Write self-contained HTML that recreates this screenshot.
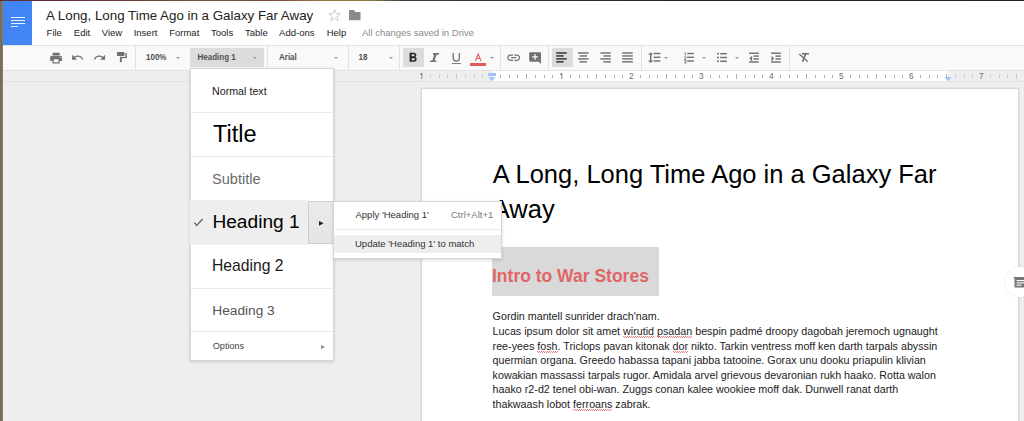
<!DOCTYPE html>
<html><head><meta charset="utf-8"><title>Google Docs</title><style>*{margin:0;padding:0;box-sizing:content-box}
html,body{width:1024px;height:421px;overflow:hidden;background:#eee}
body{position:relative;font-family:"Liberation Sans", sans-serif}
.t{position:absolute;line-height:1;white-space:pre;font-family:"Liberation Sans", sans-serif}
.r{position:absolute}
u{text-decoration:none;position:relative}
u::after{content:"";position:absolute;left:0;right:0;top:11.2px;height:2px;background:repeating-linear-gradient(90deg,#ec8080 0 1px,transparent 1px 2px) 0 0/100% 1px no-repeat,repeating-linear-gradient(90deg,transparent 0 1px,#ec8080 1px 2px) 0 1px/100% 1px no-repeat}
.arr{position:absolute;width:0;height:0;border-left:2px solid transparent;border-right:2px solid transparent;border-top:2px solid #999}
</style></head><body>
<div class="r" style="left:0px;top:0px;width:1024px;height:421px;background:#eeeeee;"></div>
<div class="r" style="left:3px;top:1px;width:1021px;height:44px;background:#ffffff;"></div>
<div class="r" style="left:3px;top:45px;width:1021px;height:1px;background:#e5e5e5;"></div>
<div class="r" style="left:3px;top:46px;width:1021px;height:24px;background:#f9f9f9;"></div>
<div class="r" style="left:3px;top:70px;width:1021px;height:1px;background:#e3e3e3;"></div>
<div class="r" style="left:3px;top:71px;width:1021px;height:10px;background:#eeeeee;"></div>
<div class="r" style="left:492px;top:71px;width:455.5px;height:10px;background:#ffffff;"></div>
<div class="r" style="left:3px;top:81px;width:1021px;height:1px;background:#e2e2e2;"></div>
<div class="r" style="left:0px;top:0px;width:2px;height:421px;background:#7b6e58;"></div>
<div class="r" style="left:2px;top:0px;width:1px;height:421px;background:#877b66;"></div>
<div class="r" style="left:0px;top:0px;width:1024px;height:1px;background:linear-gradient(90deg,#5a2a38 0px,#6a3a3a 120px,#70583e 200px,#7a4a40 270px,#9a7a40 330px,#8a7a40 370px,#3a4440 400px,#2a3434 500px,#1e2626 700px,#1a2028 1024px);"></div>
<div class="r" style="left:3px;top:1px;width:29px;height:44px;background:#4285f4;"></div>
<div class="r" style="left:11px;top:17px;width:13.5px;height:1.4px;background:rgba(255,255,255,0.86)"></div>
<div class="r" style="left:11px;top:20px;width:13.5px;height:1.4px;background:rgba(255,255,255,0.86)"></div>
<div class="r" style="left:11px;top:23px;width:13.5px;height:1.4px;background:rgba(255,255,255,0.86)"></div>
<div class="r" style="left:11px;top:26px;width:7px;height:1.4px;background:rgba(255,255,255,0.86)"></div>
<div class="t" style="left:46.00px;top:8.72px;font-size:13.33px;color:#222;font-weight:400;">A Long, Long Time Ago in a Galaxy Far Away</div>
<div class="t" style="left:46.60px;top:28.06px;font-size:9.5px;color:#222;font-weight:400;">File</div>
<div class="t" style="left:73.80px;top:28.06px;font-size:9.5px;color:#222;font-weight:400;">Edit</div>
<div class="t" style="left:101.80px;top:28.06px;font-size:9.5px;color:#222;font-weight:400;">View</div>
<div class="t" style="left:133.70px;top:28.06px;font-size:9.5px;color:#222;font-weight:400;">Insert</div>
<div class="t" style="left:169.20px;top:28.06px;font-size:9.5px;color:#222;font-weight:400;">Format</div>
<div class="t" style="left:211.00px;top:28.06px;font-size:9.5px;color:#222;font-weight:400;">Tools</div>
<div class="t" style="left:245.00px;top:28.06px;font-size:9.5px;color:#222;font-weight:400;">Table</div>
<div class="t" style="left:279.10px;top:28.06px;font-size:9.5px;color:#222;font-weight:400;">Add-ons</div>
<div class="t" style="left:326.70px;top:28.06px;font-size:9.5px;color:#222;font-weight:400;">Help</div>
<div class="t" style="left:362.00px;top:28.06px;font-size:9.5px;color:#8a8a8a;font-weight:400;">All changes saved in Drive</div>
<svg class="r" style="left:328px;top:8px" width="13" height="14" viewBox="0 0 13 14"><path d="M6.5 1.3 L8 5.6 L12.3 5.7 L8.9 8.4 L10.1 12.7 L6.5 10.2 L2.9 12.7 L4.1 8.4 L0.7 5.7 L5 5.6 Z" fill="none" stroke="#c8c8c8" stroke-width="0.9"/></svg>
<svg class="r" style="left:349px;top:10px" width="12" height="11" viewBox="0 0 12 11"><path d="M0 0 H5 L6.2 2 H11.5 V10.2 H0 Z" fill="#8a8a8a"/></svg>
<svg class="r" style="left:48.6px;top:50.5px" width="14.2" height="14.2" viewBox="0 0 24 24"><path fill="#717171" d="M19 8H5c-1.66 0-3 1.34-3 3v6h4v4h12v-4h4v-6c0-1.66-1.34-3-3-3zm-3 11H8v-5h8v5zm3-7c-.55 0-1-.45-1-1s.45-1 1-1 1 .45 1 1-.45 1-1 1zm-1-9H6v4h12V3z"/></svg>
<svg class="r" style="left:70.8px;top:51.2px" width="13.2" height="13.2" viewBox="0 0 24 24"><path fill="#717171" d="M12.5 8c-2.65 0-5.05.99-6.9 2.6L2 7v9h9l-3.62-3.62c1.39-1.16 3.16-1.88 5.12-1.88 3.54 0 6.55 2.31 7.6 5.5l2.37-.78C21.08 11.03 17.15 8 12.5 8z"/></svg>
<svg class="r" style="left:93.0px;top:51.0px" width="13.2" height="13.2" viewBox="0 0 24 24"><path fill="#717171" d="M18.4 10.6C16.55 8.99 14.15 8 11.5 8c-4.65 0-8.58 3.03-9.96 7.22L3.9 16c1.05-3.19 4.05-5.5 7.6-5.5 1.95 0 3.73.72 5.12 1.88L13 16h9V7l-3.6 3.6z"/></svg>
<svg class="r" style="left:116px;top:51px" width="12" height="12" viewBox="0 0 12 12"><g fill="#717171"><rect x="0.9" y="1.1" width="7.4" height="3.8" rx="0.6"/><rect x="8.2" y="2.3" width="1.4" height="1" /><rect x="9.4" y="2.3" width="1.4" height="4.7"/><rect x="4" y="5.9" width="6.8" height="1.25"/><rect x="3.9" y="5.9" width="1.9" height="5.2"/></g></svg>
<div class="r" style="left:135px;top:46px;width:1px;height:24px;background:#e2e2e2;"></div>
<div class="r" style="left:267px;top:46px;width:1px;height:24px;background:#e2e2e2;"></div>
<div class="r" style="left:348px;top:46px;width:1px;height:24px;background:#e2e2e2;"></div>
<div class="r" style="left:399px;top:46px;width:1px;height:24px;background:#e2e2e2;"></div>
<div class="r" style="left:500px;top:46px;width:1px;height:24px;background:#e2e2e2;"></div>
<div class="r" style="left:548px;top:46px;width:1px;height:24px;background:#e2e2e2;"></div>
<div class="r" style="left:641px;top:46px;width:1px;height:24px;background:#e2e2e2;"></div>
<div class="r" style="left:789px;top:46px;width:1px;height:24px;background:#e2e2e2;"></div>
<div class="t" style="left:146.00px;top:53.73px;font-size:8px;color:#505050;font-weight:700;transform:scaleY(1.24);transform-origin:0 6.8px">100%</div>
<div class="arr" style="left:175.5px;top:57px"></div>
<div class="r" style="left:190px;top:48px;width:74px;height:19px;background:#dcdcdc;border-radius:1px"></div>
<div class="t" style="left:197.50px;top:53.73px;font-size:8px;color:#505050;font-weight:700;transform:scaleY(1.24);transform-origin:0 6.8px">Heading 1</div>
<div class="arr" style="left:252.5px;top:57px"></div>
<div class="t" style="left:279.00px;top:53.73px;font-size:8px;color:#505050;font-weight:700;transform:scaleY(1.24);transform-origin:0 6.8px">Arial</div>
<div class="arr" style="left:333.5px;top:57px"></div>
<div class="t" style="left:358.50px;top:53.73px;font-size:8px;color:#505050;font-weight:700;transform:scaleY(1.24);transform-origin:0 6.8px">18</div>
<div class="arr" style="left:388.5px;top:57px"></div>
<div class="r" style="left:403px;top:48px;width:21px;height:19px;background:#dcdcdc;border-radius:1px"></div>
<svg class="r" style="left:404.6px;top:50.2px" width="15.8" height="15.8" viewBox="0 0 24 24"><path fill="#222" d="M15.6 10.79c.97-.67 1.65-1.77 1.65-2.79 0-2.26-1.75-4-4-4H7v14h7.04c2.09 0 3.71-1.7 3.71-3.79 0-1.52-.86-2.82-2.15-3.42zM10 6.5h3c.83 0 1.5.67 1.5 1.5s-.67 1.5-1.5 1.5h-3v-3zm3.5 9H10v-3h3.5c.83 0 1.5.67 1.5 1.5s-.67 1.5-1.5 1.5z"/></svg>
<svg class="r" style="left:429px;top:52px" width="11" height="11" viewBox="0 0 11 11"><path fill="#717171" d="M4 1.1 H9.9 V2.7 H7.5 L5.6 8.5 H7.4 V9.9 H1.1 V8.5 H3.3 L5.2 2.7 H4 Z"/></svg>
<svg class="r" style="left:450px;top:52px" width="12" height="13" viewBox="0 0 12 13"><path fill="none" stroke="#717171" stroke-width="1.3" d="M3.25 1 V6 A3.05 3.05 0 0 0 9.35 6 V1"/><rect x="1.8" y="11.1" width="9" height="0.95" fill="#717171"/></svg>
<svg class="r" style="left:473px;top:52px" width="10" height="11" viewBox="0 0 10 11"><path fill="none" stroke="#e06464" stroke-width="1.15" d="M2.4 9 L5.2 1.9 L8 9 M3.4 6.5 H7"/></svg>
<div class="r" style="left:470px;top:63px;width:16px;height:3px;background:#df5b5b;"></div>
<div class="arr" style="left:489.5px;top:57px"></div>
<svg class="r" style="left:505.6px;top:49.9px" width="15.4" height="15.4" viewBox="0 0 24 24"><path fill="#717171" d="M3.9 12c0-1.71 1.39-3.1 3.1-3.1h4V7H7c-2.76 0-5 2.24-5 5s2.24 5 5 5h4v-1.9H7c-1.71 0-3.1-1.39-3.1-3.1zM8 13h8v-2H8v2zm9-6h-4v1.9h4c1.71 0 3.1 1.39 3.1 3.1s-1.39 3.1-3.1 3.1h-4V17h4c2.76 0 5-2.24 5-5s-2.24-5-5-5z"/></svg>
<svg class="r" style="left:527.8px;top:51.0px" width="14.2" height="14.2" viewBox="0 0 24 24"><path fill="#717171" d="M21.99 4c0-1.1-.89-2-1.99-2H4c-1.1 0-2 .9-2 2v12c0 1.1.9 2 2 2h14l4 4-.01-18zM17 11h-4v4h-2v-4H7V9h4V5h2v4h4v2z"/></svg>
<div class="r" style="left:552px;top:48px;width:20.5px;height:19px;background:#dcdcdc;border-radius:1px"></div>
<svg class="r" style="left:0;top:0" width="1024" height="80" viewBox="0 0 1024 80"><g fill="#2e2e2e"><rect x="556.20" y="52.27" width="10.50" height="1.45"/><rect x="556.20" y="55.23" width="7.40" height="1.45"/><rect x="556.20" y="58.17" width="10.50" height="1.45"/><rect x="556.20" y="61.12" width="7.40" height="1.45"/></g></svg>
<svg class="r" style="left:0;top:0" width="1024" height="80" viewBox="0 0 1024 80"><g fill="#717171"><rect x="578.00" y="52.27" width="10.50" height="1.45"/><rect x="579.50" y="55.23" width="7.50" height="1.45"/><rect x="578.00" y="58.17" width="10.50" height="1.45"/><rect x="579.50" y="61.12" width="7.50" height="1.45"/></g></svg>
<svg class="r" style="left:0;top:0" width="1024" height="80" viewBox="0 0 1024 80"><g fill="#717171"><rect x="600.30" y="52.27" width="10.50" height="1.45"/><rect x="603.30" y="55.23" width="7.50" height="1.45"/><rect x="600.30" y="58.17" width="10.50" height="1.45"/><rect x="603.30" y="61.12" width="7.50" height="1.45"/></g></svg>
<svg class="r" style="left:0;top:0" width="1024" height="80" viewBox="0 0 1024 80"><g fill="#717171"><rect x="622.20" y="52.27" width="10.60" height="1.45"/><rect x="622.20" y="55.23" width="10.60" height="1.45"/><rect x="622.20" y="58.17" width="10.60" height="1.45"/><rect x="622.20" y="61.12" width="10.60" height="1.45"/></g></svg>
<svg class="r" style="left:646.5px;top:51.5px" width="8" height="12" viewBox="0 0 8 12"><path fill="#717171" d="M3.0 2.6 H1.0 L3.7 0.4 L6.4 2.6 H4.4 V8.6 H6.4 L3.7 10.9 L1.0 8.6 H3.0 Z"/></svg>
<svg class="r" style="left:0;top:0" width="1024" height="80" viewBox="0 0 1024 80"><g fill="#717171"><rect x="653.60" y="52.77" width="6.80" height="1.45"/><rect x="653.60" y="56.57" width="6.80" height="1.45"/><rect x="653.60" y="60.27" width="6.80" height="1.45"/></g></svg>
<div class="arr" style="left:664.2px;top:57.2px"></div>
<svg class="r" style="left:682.5px;top:51.6px" width="4.5" height="12" viewBox="0 0 4.5 12"><path fill="none" stroke="#717171" stroke-width="0.75" d="M1.3 0.8 H2.4 V3.6 M1.1 4.8 H3.1 V6 L1.3 7.6 H3.2 M1.1 8.4 H3.1 L2 9.7 H3.1 V11.1 H1.1"/></svg>
<svg class="r" style="left:0;top:0" width="1024" height="80" viewBox="0 0 1024 80"><g fill="#717171"><rect x="687.20" y="52.77" width="6.60" height="1.45"/><rect x="687.20" y="56.57" width="6.60" height="1.45"/><rect x="687.20" y="60.27" width="6.60" height="1.45"/></g></svg>
<div class="arr" style="left:702.2px;top:57.2px"></div>
<svg class="r" style="left:0;top:0" width="1024" height="80" viewBox="0 0 1024 80"><g fill="#717171"><circle cx="717.95" cy="53.7" r="1"/><circle cx="717.95" cy="57.5" r="1"/><circle cx="717.95" cy="61.3" r="1"/></g></svg>
<svg class="r" style="left:0;top:0" width="1024" height="80" viewBox="0 0 1024 80"><g fill="#717171"><rect x="720.20" y="52.98" width="6.70" height="1.45"/><rect x="720.20" y="56.77" width="6.70" height="1.45"/><rect x="720.20" y="60.57" width="6.70" height="1.45"/></g></svg>
<div class="arr" style="left:735.3px;top:57.2px"></div>
<svg class="r" style="left:0;top:0" width="1024" height="80" viewBox="0 0 1024 80"><g fill="#717171"><rect x="749.00" y="52.48" width="9.80" height="1.45"/><rect x="753.50" y="55.38" width="5.30" height="1.45"/><rect x="753.50" y="58.27" width="5.30" height="1.45"/><rect x="749.00" y="61.27" width="9.80" height="1.45"/></g></svg>
<svg class="r" style="left:749px;top:55px" width="4" height="7" viewBox="0 0 4 7"><path fill="#717171" d="M3.1 0.8 V6.4 L0.4 3.6 Z"/></svg>
<svg class="r" style="left:0;top:0" width="1024" height="80" viewBox="0 0 1024 80"><g fill="#717171"><rect x="771.00" y="52.48" width="9.80" height="1.45"/><rect x="775.50" y="55.38" width="5.30" height="1.45"/><rect x="775.50" y="58.27" width="5.30" height="1.45"/><rect x="771.00" y="61.27" width="9.80" height="1.45"/></g></svg>
<svg class="r" style="left:771px;top:55px" width="4" height="7" viewBox="0 0 4 7"><path fill="#717171" d="M0.5 0.8 V6.4 L3.2 3.6 Z"/></svg>
<svg class="r" style="left:797.5px;top:52px" width="12" height="11" viewBox="0 0 12 11"><path fill="#717171" d="M4 1 H11 V2.4 H8.3 L5.3 9.8 H3.6 L6.5 2.4 H4 Z"/><path stroke="#717171" stroke-width="1.4" d="M1.3 2 L9.8 9.8"/></svg>
<div class="r" style="left:429.75px;top:75px;width:1px;height:3px;background:#c6c6c6"></div>
<div class="r" style="left:438.50px;top:75px;width:1px;height:3px;background:#c6c6c6"></div>
<div class="r" style="left:447.25px;top:75px;width:1px;height:3px;background:#c6c6c6"></div>
<div class="r" style="left:456.00px;top:74px;width:1px;height:5px;background:#c6c6c6"></div>
<div class="r" style="left:464.75px;top:75px;width:1px;height:3px;background:#c6c6c6"></div>
<div class="r" style="left:473.50px;top:75px;width:1px;height:3px;background:#c6c6c6"></div>
<div class="r" style="left:482.25px;top:75px;width:1px;height:3px;background:#c6c6c6"></div>
<div class="r" style="left:499.75px;top:75px;width:1px;height:3px;background:#b0b0b0"></div>
<div class="r" style="left:508.50px;top:75px;width:1px;height:3px;background:#b0b0b0"></div>
<div class="r" style="left:517.25px;top:75px;width:1px;height:3px;background:#b0b0b0"></div>
<div class="r" style="left:526.00px;top:74px;width:1px;height:5px;background:#b0b0b0"></div>
<div class="r" style="left:534.75px;top:75px;width:1px;height:3px;background:#b0b0b0"></div>
<div class="r" style="left:543.50px;top:75px;width:1px;height:3px;background:#b0b0b0"></div>
<div class="r" style="left:552.25px;top:75px;width:1px;height:3px;background:#b0b0b0"></div>
<div class="r" style="left:569.75px;top:75px;width:1px;height:3px;background:#b0b0b0"></div>
<div class="r" style="left:578.50px;top:75px;width:1px;height:3px;background:#b0b0b0"></div>
<div class="r" style="left:587.25px;top:75px;width:1px;height:3px;background:#b0b0b0"></div>
<div class="r" style="left:596.00px;top:74px;width:1px;height:5px;background:#b0b0b0"></div>
<div class="r" style="left:604.75px;top:75px;width:1px;height:3px;background:#b0b0b0"></div>
<div class="r" style="left:613.50px;top:75px;width:1px;height:3px;background:#b0b0b0"></div>
<div class="r" style="left:622.25px;top:75px;width:1px;height:3px;background:#b0b0b0"></div>
<div class="r" style="left:639.75px;top:75px;width:1px;height:3px;background:#b0b0b0"></div>
<div class="r" style="left:648.50px;top:75px;width:1px;height:3px;background:#b0b0b0"></div>
<div class="r" style="left:657.25px;top:75px;width:1px;height:3px;background:#b0b0b0"></div>
<div class="r" style="left:666.00px;top:74px;width:1px;height:5px;background:#b0b0b0"></div>
<div class="r" style="left:674.75px;top:75px;width:1px;height:3px;background:#b0b0b0"></div>
<div class="r" style="left:683.50px;top:75px;width:1px;height:3px;background:#b0b0b0"></div>
<div class="r" style="left:692.25px;top:75px;width:1px;height:3px;background:#b0b0b0"></div>
<div class="r" style="left:709.75px;top:75px;width:1px;height:3px;background:#b0b0b0"></div>
<div class="r" style="left:718.50px;top:75px;width:1px;height:3px;background:#b0b0b0"></div>
<div class="r" style="left:727.25px;top:75px;width:1px;height:3px;background:#b0b0b0"></div>
<div class="r" style="left:736.00px;top:74px;width:1px;height:5px;background:#b0b0b0"></div>
<div class="r" style="left:744.75px;top:75px;width:1px;height:3px;background:#b0b0b0"></div>
<div class="r" style="left:753.50px;top:75px;width:1px;height:3px;background:#b0b0b0"></div>
<div class="r" style="left:762.25px;top:75px;width:1px;height:3px;background:#b0b0b0"></div>
<div class="r" style="left:779.75px;top:75px;width:1px;height:3px;background:#b0b0b0"></div>
<div class="r" style="left:788.50px;top:75px;width:1px;height:3px;background:#b0b0b0"></div>
<div class="r" style="left:797.25px;top:75px;width:1px;height:3px;background:#b0b0b0"></div>
<div class="r" style="left:806.00px;top:74px;width:1px;height:5px;background:#b0b0b0"></div>
<div class="r" style="left:814.75px;top:75px;width:1px;height:3px;background:#b0b0b0"></div>
<div class="r" style="left:823.50px;top:75px;width:1px;height:3px;background:#b0b0b0"></div>
<div class="r" style="left:832.25px;top:75px;width:1px;height:3px;background:#b0b0b0"></div>
<div class="r" style="left:849.75px;top:75px;width:1px;height:3px;background:#b0b0b0"></div>
<div class="r" style="left:858.50px;top:75px;width:1px;height:3px;background:#b0b0b0"></div>
<div class="r" style="left:867.25px;top:75px;width:1px;height:3px;background:#b0b0b0"></div>
<div class="r" style="left:876.00px;top:74px;width:1px;height:5px;background:#b0b0b0"></div>
<div class="r" style="left:884.75px;top:75px;width:1px;height:3px;background:#b0b0b0"></div>
<div class="r" style="left:893.50px;top:75px;width:1px;height:3px;background:#b0b0b0"></div>
<div class="r" style="left:902.25px;top:75px;width:1px;height:3px;background:#b0b0b0"></div>
<div class="r" style="left:919.75px;top:75px;width:1px;height:3px;background:#b0b0b0"></div>
<div class="r" style="left:928.50px;top:75px;width:1px;height:3px;background:#b0b0b0"></div>
<div class="r" style="left:937.25px;top:75px;width:1px;height:3px;background:#b0b0b0"></div>
<div class="r" style="left:946.00px;top:74px;width:1px;height:5px;background:#b0b0b0"></div>
<div class="r" style="left:954.75px;top:75px;width:1px;height:3px;background:#c6c6c6"></div>
<div class="r" style="left:963.50px;top:75px;width:1px;height:3px;background:#c6c6c6"></div>
<div class="r" style="left:972.25px;top:75px;width:1px;height:3px;background:#c6c6c6"></div>
<div class="r" style="left:989.75px;top:75px;width:1px;height:3px;background:#c6c6c6"></div>
<div class="r" style="left:998.50px;top:75px;width:1px;height:3px;background:#c6c6c6"></div>
<div class="r" style="left:1007.25px;top:75px;width:1px;height:3px;background:#c6c6c6"></div>
<div class="r" style="left:1016.00px;top:74px;width:1px;height:5px;background:#c6c6c6"></div>
<svg class="r" style="left:419.00px;top:72px" width="5" height="8" viewBox="0 0 5 8"><path fill="#6a6a6a" d="M2.5 1 H3.3 V6.9 H2.5 V2.4 L1.3 2.9 V2.1 Z"/></svg>
<svg class="r" style="left:559.00px;top:72px" width="5" height="8" viewBox="0 0 5 8"><path fill="#6a6a6a" d="M2.5 1 H3.3 V6.9 H2.5 V2.4 L1.3 2.9 V2.1 Z"/></svg>
<div class="t" style="left:629.10px;top:71.87px;font-size:8.3px;color:#6a6a6a;transform:scaleY(1.12);transform-origin:0 7px">2</div>
<div class="t" style="left:699.10px;top:71.87px;font-size:8.3px;color:#6a6a6a;transform:scaleY(1.12);transform-origin:0 7px">3</div>
<div class="t" style="left:769.10px;top:71.87px;font-size:8.3px;color:#6a6a6a;transform:scaleY(1.12);transform-origin:0 7px">4</div>
<div class="t" style="left:839.10px;top:71.87px;font-size:8.3px;color:#6a6a6a;transform:scaleY(1.12);transform-origin:0 7px">5</div>
<div class="t" style="left:909.10px;top:71.87px;font-size:8.3px;color:#6a6a6a;transform:scaleY(1.12);transform-origin:0 7px">6</div>
<div class="t" style="left:979.10px;top:71.87px;font-size:8.3px;color:#6a6a6a;transform:scaleY(1.12);transform-origin:0 7px">7</div>
<div class="r" style="left:488px;top:73px;width:8px;height:2.6px;background:#a1c2fa;"></div>
<svg class="r" style="left:488px;top:76.6px" width="8" height="4.4" viewBox="0 0 8 5"><path fill="#a1c2fa" d="M0 0 H8 L4 5 Z"/></svg>
<svg class="r" style="left:944px;top:76.6px" width="8" height="4.4" viewBox="0 0 8 5"><path fill="#a1c2fa" d="M0 0 H8 L4 5 Z"/></svg>
<div class="r" style="left:421px;top:88px;width:596px;height:340px;background:#fff;border:1px solid #d9d9d9;box-shadow:0 0 2px rgba(0,0,0,0.12)"></div>
<div class="t" style="left:492.80px;top:161.61px;font-size:25.5px;color:#000;font-weight:400;">A Long, Long Time Ago in a Galaxy Far</div>
<div class="t" style="left:492.80px;top:197.21px;font-size:25.5px;color:#000;font-weight:400;">Away</div>
<div class="r" style="left:492px;top:247px;width:167px;height:49px;background:#d9d9d9;"></div>
<div class="t" style="left:492.00px;top:268.19px;font-size:17.5px;color:#e06666;font-weight:700;">Intro to War Stores</div>
<div class="t" style="left:492.60px;top:311.32px;font-size:10.73px;color:#222;font-weight:400;">Gordin mantell sunrider drach&#39;nam.</div>
<div class="t" style="left:492.60px;top:325.95px;font-size:10.73px;color:#222;font-weight:400;">Lucas ipsum dolor sit amet <u>wirutid</u> <u>psadan</u> bespin padmé droopy dagobah jeremoch ugnaught</div>
<div class="t" style="left:492.60px;top:340.58px;font-size:10.73px;color:#222;font-weight:400;">ree-yees <u>fosh</u>. Triclops pavan kitonak <u>dor</u> nikto. Tarkin ventress moff ken darth tarpals abyssin</div>
<div class="t" style="left:492.60px;top:355.21px;font-size:10.73px;color:#222;font-weight:400;">quermian organa. Greedo habassa tapani jabba tatooine. Gorax unu dooku priapulin klivian</div>
<div class="t" style="left:492.60px;top:369.84px;font-size:10.73px;color:#222;font-weight:400;">kowakian massassi tarpals rugor. Amidala arvel grievous devaronian rukh haako. Rotta walon</div>
<div class="t" style="left:492.60px;top:384.47px;font-size:10.73px;color:#222;font-weight:400;">haako r2-d2 tenel obi-wan. Zuggs conan kalee wookiee moff dak. Dunwell ranat darth</div>
<div class="t" style="left:492.60px;top:399.10px;font-size:10.73px;color:#222;font-weight:400;">thakwaash lobot <u>ferroans</u> zabrak.</div>
<div class="r" style="left:1004.5px;top:267px;width:30px;height:30px;border-radius:50%;background:#fff;box-shadow:0 0 2px rgba(0,0,0,0.13)"></div>
<svg class="r" style="left:1012.5px;top:277px" width="12" height="11" viewBox="0 0 12 11"><path fill="#777" d="M0 0 H12 V10.5 H1.5 V1.5 Z"/><rect x="3.5" y="3" width="8" height="1.1" fill="#fff"/><rect x="3.5" y="5.3" width="8" height="1.1" fill="#fff"/><rect x="3.5" y="7.6" width="5" height="1.1" fill="#fff"/></svg>
<div class="r" style="left:190px;top:68px;width:142px;height:291px;background:#fff;border:1px solid rgba(0,0,0,0.16);box-shadow:0 1px 3px rgba(0,0,0,0.16)"></div>
<div class="r" style="left:191px;top:112px;width:142px;height:1px;background:#ebebeb;"></div>
<div class="r" style="left:191px;top:156px;width:142px;height:1px;background:#ebebeb;"></div>
<div class="r" style="left:191px;top:288px;width:142px;height:1px;background:#ebebeb;"></div>
<div class="r" style="left:191px;top:331px;width:142px;height:1px;background:#ebebeb;"></div>
<div class="r" style="left:190px;top:200px;width:118px;height:44.5px;background:#eeeeee;"></div>
<div class="r" style="left:308px;top:201px;width:24px;height:41px;background:linear-gradient(#ebebeb,#e4e4e4);border:1px solid #cfcfcf"></div>
<svg class="r" style="left:318.6px;top:221px" width="5" height="5" viewBox="0 0 5 5"><path fill="#222" d="M0 0 L4.6 2.35 L0 4.7 Z"/></svg>
<div class="t" style="left:212.00px;top:85.74px;font-size:10.7px;color:#222;font-weight:400;">Normal text</div>
<div class="t" style="left:213.00px;top:123.01px;font-size:23.5px;color:#000;font-weight:400;">Title</div>
<div class="t" style="left:212.00px;top:172.34px;font-size:14.6px;color:#6a6a6a;font-weight:400;">Subtitle</div>
<svg class="r" style="left:193px;top:217px" width="11" height="10" viewBox="0 0 11 10"><path fill="none" stroke="#6a6a6a" stroke-width="1.45" d="M1.4 5.6 L3.7 8.4 L9.7 1.9"/></svg>
<div class="t" style="left:212.40px;top:211.83px;font-size:19.1px;color:#000;font-weight:400;letter-spacing:0.03px">Heading 1</div>
<div class="t" style="left:212.00px;top:258.21px;font-size:15.7px;color:#1a1a1a;font-weight:400;">Heading 2</div>
<div class="t" style="left:212.30px;top:304.00px;font-size:13.7px;color:#555;font-weight:400;">Heading 3</div>
<div class="t" style="left:212.80px;top:341.50px;font-size:9.1px;color:#444;font-weight:400;">Options</div>
<svg class="r" style="left:321px;top:344.5px" width="4" height="4" viewBox="0 0 4 4"><path fill="#8a8a8a" d="M0 0 L4 2 L0 4 Z"/></svg>
<div class="r" style="left:333px;top:201px;width:167px;height:56px;background:#fff;border:1px solid rgba(0,0,0,0.16);box-shadow:0 1px 3px rgba(0,0,0,0.16)"></div>
<div class="r" style="left:334px;top:229px;width:167px;height:1px;background:#ebebeb;"></div>
<div class="r" style="left:334px;top:235px;width:167px;height:18px;background:#eeeeee;"></div>
<div class="t" style="left:355.50px;top:210.26px;font-size:9.5px;color:#333;font-weight:400;">Apply &#39;Heading 1&#39;</div>
<div class="t" style="left:451.00px;top:210.26px;font-size:9.5px;color:#777;font-weight:400;">Ctrl+Alt+1</div>
<div class="t" style="left:355.00px;top:238.56px;font-size:9.5px;color:#333;font-weight:400;">Update &#39;Heading 1&#39; to match</div>
</body></html>
